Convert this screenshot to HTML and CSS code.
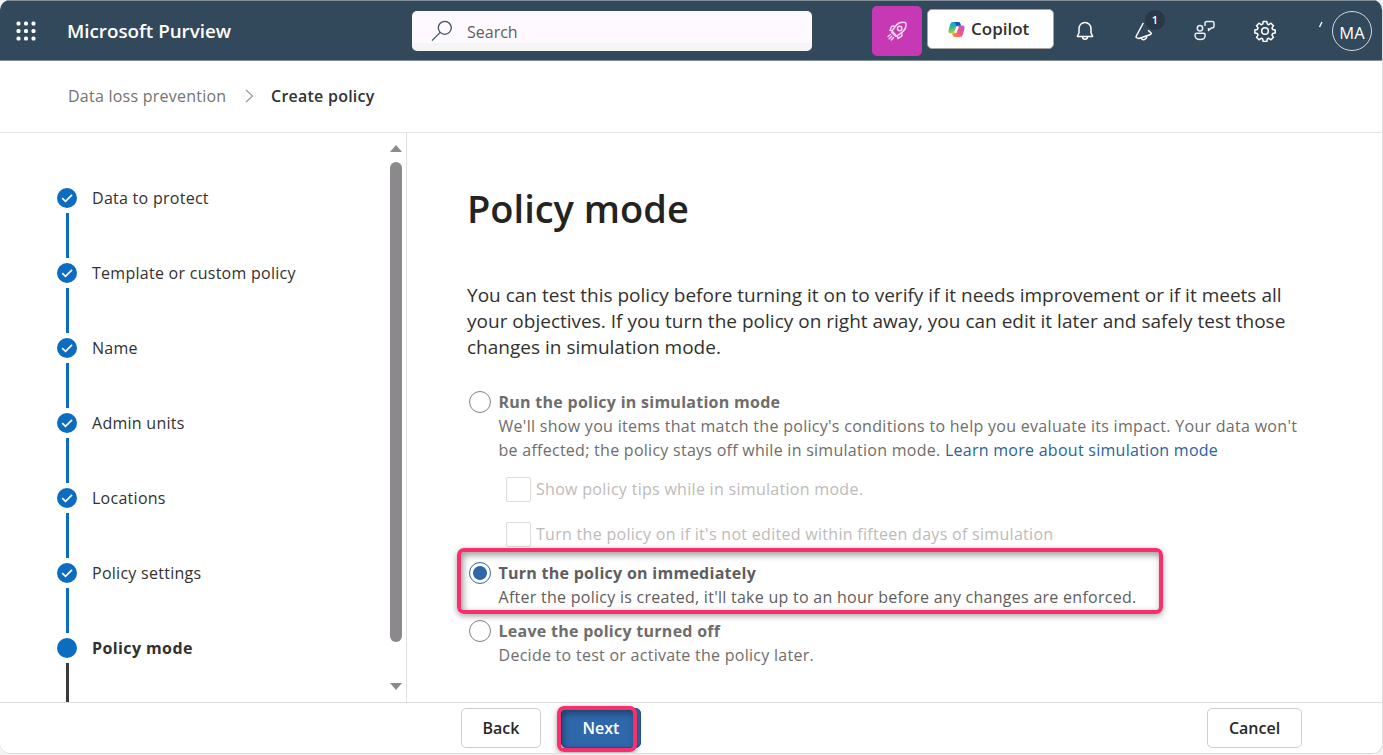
FILE: index.html
```html
<!DOCTYPE html>
<html lang="en">
<head>
<meta charset="utf-8">
<title>Microsoft Purview</title>
<link rel="stylesheet" href="styles.css">
</head>
<body>
<div class="app">
  <header class="topbar">
    <svg class="waffle" width="20" height="20" viewBox="0 0 20 20" fill="#fff"><rect x="0.5" y="0.5" width="4" height="4" rx="1.500"/><rect x="8" y="0.5" width="4" height="4" rx="1.500"/><rect x="15.500" y="0.5" width="4" height="4" rx="1.500"/><rect x="0.5" y="8" width="4" height="4" rx="1.500"/><rect x="8" y="8" width="4" height="4" rx="1.500"/><rect x="15.500" y="8" width="4" height="4" rx="1.500"/><rect x="0.5" y="15.500" width="4" height="4" rx="1.500"/><rect x="8" y="15.500" width="4" height="4" rx="1.500"/><rect x="15.500" y="15.500" width="4" height="4" rx="1.500"/></svg>
    <span class="brand">Microsoft Purview</span>
    <div class="search">
      <svg width="22" height="22" viewBox="0 0 22 22" fill="none" stroke="#3e5265" stroke-width="1.300"><circle cx="13.800" cy="7.800" r="6.500"/><path d="M9.200 12.400 1 20.600"/></svg>
      <span class="search-text">Search</span>
    </div>
    <div class="rocket">
      <svg width="20" height="20" viewBox="0 0 20 20" fill="none" stroke="#f6d3ef" stroke-width="1.500" stroke-linejoin="round" stroke-linecap="round"><path d="M5 10 9.300 4.200C11.500 1.600 14.500.900 18 1.500c.8.200 1 .5 1 1.200.3 3.400-.8 6-3.200 8L10 15.200Z"/><circle cx="12.700" cy="7.500" r="2.200"/><path d="M8.300 5.200 6 5Q4.800 5 4.300 6L3 9.300 5.300 9.800M14.800 11.700 15 14q0 1.200-1 1.700L11 17.500l-.7-2.300M4.800 11.500l3.800 3.800M3.500 13.500 1 15.500M6.500 16.500 4.300 19M4.700 15.300 2.200 17.800"/></svg>
    </div>
    <div class="copilot">
      <svg width="17" height="17" viewBox="0 0 17 17"><defs>
        <linearGradient id="ga" x1="0" y1="0" x2="0.300" y2="1"><stop offset="0" stop-color="#2492e8"/><stop offset=".5" stop-color="#2ab7a0"/><stop offset="1" stop-color="#d9d02e"/></linearGradient>
        <linearGradient id="gb" x1="1" y1="0" x2="0" y2="1"><stop offset="0" stop-color="#b35ae0"/><stop offset=".5" stop-color="#f0567c"/><stop offset="1" stop-color="#ff9a4a"/></linearGradient></defs>
        <path d="M4.800 1h5.700q1.300 0 1.800 1.500l.6 2.200h-2.300Q9.300 4.700 8.800 6L7.300 11.200Q6.800 12.500 5.300 12.500H2.500Q0 12.500.5 9.500L2.200 3.200Q2.900 1 4.800 1Z" fill="url(#ga)"/>
        <path d="M6.500 1h4q1.300 0 1.800 1.500l.7 2.200h-2.300Q9.300 4.700 8.900 5.700Z" fill="#1757c5"/>
        <path d="M12.200 16H6.800Q5.200 16 4.700 14.500L4 12.500h1.500Q7 12.500 7.600 10.800L9.300 6Q9.800 4.500 11.300 4.500h3.200Q17 4.600 16.500 7.500L14.800 13.800Q14.200 16 12.200 16Z" fill="url(#gb)"/>
        <path d="M9.800 5.500 7.200 11.700" stroke="#fff" stroke-width="2.300"/></svg>
      <span class="copilot-text">Copilot</span>
    </div>
    <svg class="bell" width="18" height="20" viewBox="0 0 18 20" fill="none" stroke="#fff" stroke-width="1.500" stroke-linejoin="round"><path d="M9 1.500a6 6 0 0 0-6 6v4.300L1.300 15.500h15.400L15 11.800V7.500a6 6 0 0 0-6-6ZM6.500 15.700a2.500 2.500 0 0 0 5 0"/></svg>
    <div class="news">
      <svg width="19" height="20" viewBox="0 0 19 20" fill="none" stroke="#fff" stroke-width="1.500" stroke-linejoin="round" stroke-linecap="round"><path d="M8 2.500 1.300 15q-.6 1.300.7 1.900l2 .6L15.500 13.500q1.200-.6.500-1.500L13.500 9.500M6.300 17c.4 2.500 4.900 2.600 5.600-2"/></svg>
      <span class="badge">1</span>
    </div>
    <svg class="people" width="21" height="21" viewBox="0 0 21 21" fill="none" stroke="#e9eef2" stroke-width="1.500" stroke-linejoin="round"><circle cx="6" cy="8.300" r="2.700"/><path d="M2.700 13.200h6.800q1.700 0 1.700 1.700c0 3.200-2 4.600-5.100 4.600S1 18.100 1 14.900q0-1.700 1.700-1.700ZM11 3.300q0-1.800 1.800-1.800h5.400q1.800 0 1.800 1.800v2.800q0 1.800-1.800 1.800h-.7l-3 2.600V7.900M11 3.300V6"/></svg>
    <svg class="gear" width="22" height="22" viewBox="0 0 22 22" fill="none" stroke="#fff" stroke-width="1.500" stroke-linejoin="round"><circle cx="11" cy="11" r="3.300"/><path d="M9.200 1.500h3.600l.5 2.600 1.500.6 2.200-1.500 2.500 2.500-1.500 2.200.6 1.500 2.600.5v3.200l-2.600.5-.6 1.500 1.500 2.200-2.500 2.500-2.200-1.500-1.500.6-.5 2.600H9.200l-.5-2.600-1.500-.6L5 19.800l-2.500-2.500L4 15.100l-.6-1.500-2.600-.5V9.900l2.600-.5L4 7.900 2.500 5.700 5 3.200l2.200 1.500 1.500-.6Z"/></svg>
    <svg class="tick" width="5" height="8" viewBox="0 0 5 8" stroke="#fff" stroke-width="1.400"><path d="M4 1 1.500 6"/></svg>
    <span class="avatar">MA</span>
  </header>

  <nav class="crumbs">
    <span class="crumb">Data loss prevention</span>
    <svg width="9" height="14" viewBox="0 0 9 14" fill="none" stroke="#999" stroke-width="1.200"><path d="M1 1l6.500 6L1 13"/></svg>
    <span class="crumb-current">Create policy</span>
  </nav>

  <div class="body">
    <aside class="sidebar">
      <ol class="steps">
        <li class="step"><svg class="dot" viewBox="0 0 20 20"><circle cx="10" cy="10" r="10" fill="#0c6cbf"/><path d="M5.200 10.200 8.500 13.300 15 6.800" fill="none" stroke="#fff" stroke-width="1.700"/></svg><span>Data to protect</span></li>
        <li class="step"><svg class="dot" viewBox="0 0 20 20"><circle cx="10" cy="10" r="10" fill="#0c6cbf"/><path d="M5.200 10.200 8.500 13.300 15 6.800" fill="none" stroke="#fff" stroke-width="1.700"/></svg><span>Template or custom policy</span></li>
        <li class="step"><svg class="dot" viewBox="0 0 20 20"><circle cx="10" cy="10" r="10" fill="#0c6cbf"/><path d="M5.200 10.200 8.500 13.300 15 6.800" fill="none" stroke="#fff" stroke-width="1.700"/></svg><span>Name</span></li>
        <li class="step"><svg class="dot" viewBox="0 0 20 20"><circle cx="10" cy="10" r="10" fill="#0c6cbf"/><path d="M5.200 10.200 8.500 13.300 15 6.800" fill="none" stroke="#fff" stroke-width="1.700"/></svg><span>Admin units</span></li>
        <li class="step"><svg class="dot" viewBox="0 0 20 20"><circle cx="10" cy="10" r="10" fill="#0c6cbf"/><path d="M5.200 10.200 8.500 13.300 15 6.800" fill="none" stroke="#fff" stroke-width="1.700"/></svg><span>Locations</span></li>
        <li class="step"><svg class="dot" viewBox="0 0 20 20"><circle cx="10" cy="10" r="10" fill="#0c6cbf"/><path d="M5.200 10.200 8.500 13.300 15 6.800" fill="none" stroke="#fff" stroke-width="1.700"/></svg><span>Policy settings</span></li>
        <li class="step current"><svg class="dot" viewBox="0 0 20 20"><circle cx="10" cy="10" r="10" fill="#0c6cbf"/></svg><span>Policy mode</span></li>
      </ol>
      <div class="scrollbar"><i class="arrow-up"></i><i class="thumb"></i><i class="arrow-down"></i></div>
    </aside>

    <main class="content">
      <h1>Policy mode</h1>
      <p class="intro">You can test this policy before turning it on to verify if it needs improvement or if it meets all<br>your objectives. If you turn the policy on right away, you can edit it later and safely test those<br>changes in simulation mode.</p>
      <div class="option">
        <i class="radio"></i>
        <div class="option-text">
          <b>Run the policy in simulation mode</b><br>
          <span class="description">We'll show you items that match the policy's conditions to help you evaluate its impact. Your data won't</span><br>
          <span>be affected; the policy stays off while in simulation mode. <a class="link">Learn more about simulation mode</a></span>
        </div>
      </div>
      <div class="check"><i class="box"></i><span>Show policy tips while in simulation mode.</span></div>
      <div class="check"><i class="box"></i><span>Turn the policy on if it's not edited within fifteen days of simulation</span></div>
      <div class="option chosen">
        <i class="radio on"></i>
        <div class="option-text">
          <b>Turn the policy on immediately</b><br>
          <span>After the policy is created, it'll take up to an hour before any changes are enforced.</span>
        </div>
        <i class="mark mark-option"></i>
      </div>
      <div class="option">
        <i class="radio"></i>
        <div class="option-text">
          <b>Leave the policy turned off</b><br>
          <span>Decide to test or activate the policy later.</span>
        </div>
      </div>
    </main>
  </div>

  <footer class="footer">
    <button class="btn back">Back</button>
    <button class="btn next">Next<i class="mark mark-next"></i></button>
    <button class="btn cancel">Cancel</button>
  </footer>
</div>
</body>
</html>
```
FILE: styles.css
```css
* { box-sizing: border-box; }
body {
  margin: 0;
  background: #f3f3f3;
  font-family: "Open Sans", "Noto Sans", sans-serif;
  font-size: 16px;
  color: #323130;
  white-space: nowrap;
}
.app {
  width: 1383px;
  height: 754px;
  display: flex;
  flex-direction: column;
  background: #fff;
  border: 1px solid #dcdcdc;
  border-width: 0 1px 1px 0;
  border-radius: 10px;
  overflow: hidden;
}
.topbar {
  height: 61px;
  flex: none;
  display: flex;
  align-items: center;
  background: #32485b;
  border-top: 1px solid #84919c;
  border-bottom: 1px solid #84919c;
  color: #fff;
}
.waffle { margin-left: 16px; }
.brand { margin-left: 31px; width: 345px; font-size: 18.800px; font-weight: 600; }
.search {
  width: 400px;
  height: 40px;
  display: flex;
  align-items: center;
  gap: 14px;
  padding-left: 19px;
  border-radius: 5px;
  background: linear-gradient(#fdf9fe 32px, #f5f5f5 32px);
  color: #605e5c;
}
.search-text { padding-top: 2px; }
.rocket {
  width: 50px;
  height: 50px;
  margin-left: 60px;
  display: flex;
  align-items: center;
  justify-content: center;
  background: #c738b4;
  border-radius: 5px;
}
.copilot {
  width: 127px;
  height: 40px;
  margin: -3px 0 0 5px;
  display: flex;
  align-items: center;
  gap: 6px;
  padding-left: 20px;
  border: 1px solid #a9a49d;
  border-radius: 5px;
  background: #fff;
  color: #323130;
  font-size: 17px;
  font-weight: 600;
}
.copilot-text { padding-bottom: 1px; }
.bell { margin-left: 22px; }
.news { position: relative; margin-left: 41px; height: 20px; width: 19px; }
.news svg { display: block; }
.badge {
  position: absolute;
  left: 10px;
  top: -11px;
  width: 20px;
  height: 20px;
  border-radius: 50%;
  background: #293847;
  font-size: 11px;
  font-weight: 600;
  line-height: 20px;
  text-align: center;
}
.people { margin-left: 40px; }
.gear { margin-left: 39px; }
.tick { margin: -12px 0 0 42px; }
.avatar {
  width: 40px;
  height: 40px;
  margin-left: 9px;
  border: 1.5px solid #d5dade;
  border-radius: 50%;
  font-size: 16.500px;
  font-weight: 500;
  line-height: 41px;
  text-align: center;
}
.crumbs {
  height: 72px;
  flex: none;
  display: flex;
  align-items: center;
  padding: 0 0 1px 68px;
  border-bottom: 1px solid #e6e4e4;
  letter-spacing: 0.240px;
}
.crumb { color: #75726f; width: 177px; }
.crumb-current { margin-left: 17px; font-weight: 600; }
.body { height: 569px; flex: none; display: flex; letter-spacing: 0.270px; }
.sidebar {
  width: 407px;
  display: flex;
  justify-content: space-between;
  border-right: 1px solid #e1dfdf;
  overflow: hidden;
}
.steps { margin: 0; padding: 55px 0 0 57px; list-style: none; }
.step { height: 75px; display: grid; grid-template-columns: 20px auto; grid-template-rows: 20px 1fr; column-gap: 15px; line-height: 20px; }
.dot { width: 20px; height: 20px; }
.step::after { content: ""; width: 3px; height: 45px; margin: 5px 0 0 8.5px; background: #0c6cbf; }
.step.current { font-weight: 700; letter-spacing: 0.400px; }
.step.current::after { background: #3b3a39; }
.scrollbar { width: 20px; display: flex; flex-direction: column; align-items: center; padding: 12px 0 0; }
.arrow-up { border: 6px solid transparent; border-top: 0; border-bottom: 7px solid #8b898b; }
.thumb { width: 12px; height: 480px; margin-top: 10px; border-radius: 6px; background: #8b898b; }
.arrow-down { margin-top: 41px; border: 6px solid transparent; border-bottom: 0; border-top: 7px solid #8b898b; }
.content { flex: 1; padding: 47px 0 0 60px; }
h1 { margin: 0; font-size: 38px; line-height: 56px; font-weight: 600; letter-spacing: 0; color: #242322; }
.intro { margin: 45.500px 0 0; font-size: 19px; line-height: 26.3px; letter-spacing: 0.010px; }
.option { position: relative; display: flex; gap: 7.500px; margin-left: 2px; color: #6f6d6b; }
.intro + .option { margin-top: 29.500px; }
.option-text { line-height: 24px; }
.description { letter-spacing: 0.295px; }
.radio { width: 22px; height: 22px; margin-top: 1px; border: 1.5px solid #85827f; border-radius: 50%; background: #fff; }
.radio.on { border-color: #2f67ab; background: radial-gradient(circle, #2f67ab 6.5px, #fff 7.3px); }
.link { color: #2a629b; }
.check { display: flex; align-items: center; gap: 5px; height: 25px; margin: 15px 0 0 39px; color: #bdbbb9; letter-spacing: 0.295px; }
.check + .check { margin-top: 20px; }
.box { width: 25px; height: 25px; border: 1px solid #dedcda; border-radius: 2px; }
.chosen { margin-top: 14px; margin-bottom: 10px; color: #605e5c; }
.mark { position: absolute; border: 4px solid #f92f6b; border-radius: 7px; box-shadow: 0 2px 6px rgba(0,0,0,.35), inset 2px 3px 7px rgba(0,0,0,.4); }
.mark-option { left: -12px; top: -13px; width: 706px; height: 66px; }
.footer { flex: none; height: 51px; display: flex; align-items: center; padding-left: 461px; border-top: 1px solid #dfdddd; }
.btn {
  position: relative;
  height: 40px;
  padding: 0;
  border: 1px solid #d0cecd;
  border-radius: 5px;
  background: #fff;
  color: #292827;
  font: 600 16px "Open Sans", sans-serif;
}
.back { width: 80px; }
.next { width: 80px; margin-left: 20px; background: #2f67ab; border-color: #24568f; color: #fff; }
.mark-next { left: -5px; top: -3px; width: 80px; height: 46px; }
.cancel { width: 95px; margin-left: 566px; }
```
